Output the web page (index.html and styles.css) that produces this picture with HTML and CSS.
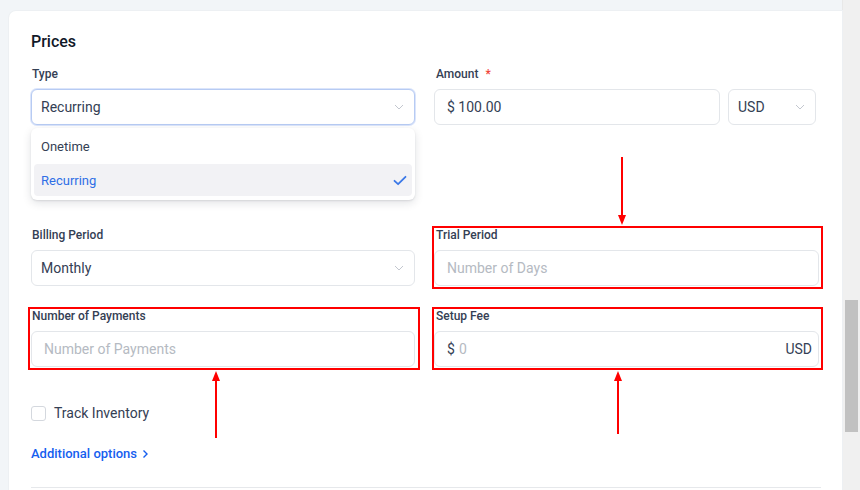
FILE: index.html
```html
<!DOCTYPE html>
<html lang="en">
<head>
<meta charset="UTF-8">
<title>Prices</title>
<link rel="stylesheet" href="styles.css">
</head>
<body>
<div class="page">
  <div class="card">
    <h2 class="card-title">Prices</h2>

    <div class="grid">
      <div class="field type-field">
        <label class="label">Type</label>
        <div class="select focused">
          <span>Recurring</span>
          <svg class="chev" width="10" height="6" viewBox="0 0 10 6"><path d="M1 1l4 4 4-4" fill="none" stroke="#c3c7cf" stroke-width="1"/></svg>
        </div>
        <!-- open dropdown menu -->
        <div class="menu">
          <div class="option">Onetime</div>
          <div class="option active">
            <span>Recurring</span>
            <svg width="14" height="11" viewBox="0 0 14 11"><path d="M1.5 5.8l3.6 3.4L12.5 1.8" fill="none" stroke="#3b78e7" stroke-width="1.8" stroke-linecap="round" stroke-linejoin="round"/></svg>
          </div>
        </div>
      </div>

      <div class="field right">
        <label class="label">Amount <span class="req">*</span></label>
        <div class="amount-row">
          <div class="input amount"><span class="val">$ 100.00</span></div>
          <div class="select currency">
            <span>USD</span>
            <svg class="chev" width="10" height="6" viewBox="0 0 10 6"><path d="M1 1l4 4 4-4" fill="none" stroke="#c3c7cf" stroke-width="1"/></svg>
          </div>
        </div>
      </div>

      <div class="field">
        <label class="label">Billing Period</label>
        <div class="select">
          <span>Monthly</span>
          <svg class="chev" width="10" height="6" viewBox="0 0 10 6"><path d="M1 1l4 4 4-4" fill="none" stroke="#c3c7cf" stroke-width="1"/></svg>
        </div>
      </div>

      <div class="field right marked">
        <label class="label">Trial Period</label>
        <div class="input"><span class="ph">Number of Days</span></div>
      </div>

      <div class="field marked left-mark">
        <label class="label">Number of Payments</label>
        <div class="input"><span class="ph">Number of Payments</span></div>
      </div>

      <div class="field right marked">
        <label class="label">Setup Fee</label>
        <div class="input fee">
          <span class="val">$</span><span class="ph zero">0</span>
          <span class="val unit">USD</span>
        </div>
      </div>
    </div>

    <div class="check-row">
      <span class="checkbox"></span>
      <span>Track Inventory</span>
    </div>

    <a class="more" href="#">Additional options <svg width="7" height="10" viewBox="0 0 7 10"><path d="M1.5 1.5l3.5 3.5-3.5 3.5" fill="none" stroke="#155eef" stroke-width="1.4"/></svg></a>

    <div class="divider"></div>
  </div>
</div>

<div class="scrollbar"><div class="thumb"></div></div>

<!-- red annotation arrows drawn over the screenshot -->
<svg class="arrows" width="860" height="490" viewBox="0 0 860 490">
  <line x1="622" y1="157" x2="622" y2="217" stroke="#ff0000" stroke-width="2"/>
  <path d="M618 215h8l-4 10z" fill="#ff0000"/>
  <line x1="216" y1="379" x2="216" y2="438" stroke="#ff0000" stroke-width="2"/>
  <path d="M212 381h8l-4-10z" fill="#ff0000"/>
  <line x1="618" y1="379" x2="618" y2="434" stroke="#ff0000" stroke-width="2"/>
  <path d="M614 381h8l-4-10z" fill="#ff0000"/>
</svg>
</body>
</html>
```

FILE: styles.css
```css
* {
    box-sizing: border-box;
}

body {
    margin: 0;
    height: 490px;
    overflow: hidden;
    display: flex;
    background: #f2f5f8;
    font-family: Roboto, "Liberation Sans", sans-serif;
    color: #344054;
}

.page {
    width: 842px;
    padding: 11px 0 0 9px;
}

.card {
    position: relative;
    background: #fff;
    border-radius: 7px 0 0 0;
    padding: 19px 23px 0 22px;
    height: 100%;
    box-shadow: 0 0 0 1px #edf0f3;
}

.card-title {
    margin: 0 0 11px;
    font-size: 16px;
    line-height: 24px;
    font-weight: 500;
    color: #101828;
}

.grid {
    display: grid;
    grid-template-columns: 384px 385px;
    column-gap: 19px;
    row-gap: 21px;
}

.type-field {
    position: relative;
    margin-bottom: 80px;
}

.field.marked {
    position: relative;
}

.field.marked::after {
    content: '';
    position: absolute;
    left: -2px;
    top: 0;
    right: -4px;
    bottom: -3px;
    border: 2px solid #ff0000;
}

.field.left-mark::after {
    left: -3px;
    right: -5px;
}

.label {
    display: block;
    font-size: 12px;
    line-height: 16px;
    font-weight: 500;
    color: #344054;
    padding-top: 1px;
    margin: 0 0 7px 1px;
}

.right .label {
    margin-left: 2px;
}

.req {
    color: #f04438;
    margin-left: 4px;
}

.select,
.input {
    height: 36px;
    border: 1px solid #e3e6ea;
    border-radius: 6px;
    display: flex;
    align-items: center;
    font-size: 14px;
    color: #344054;
    background: #fff;
}

.select {
    padding: 0 10px 0 9px;
    justify-content: space-between;
}

.select.focused {
    border-color: #b7cbf3;
    box-shadow: 0 0 0 1px #dbe5fb;
}

.input {
    padding: 0 12px;
}

.ph {
    color: #b5bac2;
}

.amount-row {
    display: flex;
    gap: 8px;
    padding-right: 3px;
}

.amount {
    flex: 1;
}

.currency {
    width: 88px;
}

.fee .zero {
    margin-left: 4px;
}

.fee .unit {
    margin-left: auto;
    margin-right: -6px;
}

.menu {
    position: absolute;
    left: 0;
    right: 0;
    top: 63px;
    background: #fff;
    border-radius: 6px;
    padding: 2px 3px 4px;
    box-shadow: 0 3px 10px rgba(16, 24, 40, 0.12), 0 1px 2px rgba(16, 24, 40, 0.1);
}

.option {
    height: 32px;
    padding: 0 5px 0 7px;
    display: flex;
    align-items: center;
    justify-content: space-between;
    font-size: 13px;
    color: #344054;
    border-radius: 4px;
}

.option.active {
    background: #f2f2f5;
    color: #2f6fe6;
    margin-top: 2px;
}

.check-row {
    display: flex;
    align-items: center;
    gap: 8px;
    margin-top: 36px;
    font-size: 14px;
    line-height: 20px;
    color: #344054;
}

.checkbox {
    width: 15px;
    height: 15px;
    border: 1px solid #d4d8de;
    border-radius: 3px;
}

.more {
    display: inline-flex;
    align-items: center;
    gap: 5px;
    margin-top: 21px;
    font-size: 13px;
    line-height: 20px;
    font-weight: 500;
    color: #155eef;
    text-decoration: none;
}

.divider {
    margin-top: 23px;
    height: 1px;
    width: 790px;
    background: #e6e8eb;
}

.scrollbar {
    width: 18px;
    background: #f0f0f0;
    border-left: 1px solid #e8e8e8;
    padding: 300px 2px 0 2px;
}

.thumb {
    height: 132px;
    background: #c1c1c1;
}

.arrows {
    position: absolute;
    left: 0;
    top: 0;
    pointer-events: none;
}
```
